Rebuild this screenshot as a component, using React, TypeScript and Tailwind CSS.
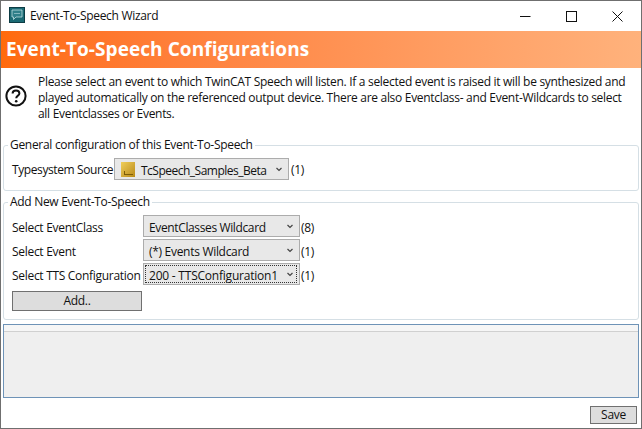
import React from 'react';

const font = { fontFamily: '"Open Sans", "Noto Sans", sans-serif' };

function Chevron() {
  return (
    <svg width="6" height="5" viewBox="0 0 6 5" className="ml-auto shrink-0">
      <path d="M0.5 1 L3 3.5 L5.5 1" fill="none" stroke="#444" strokeWidth="1.2" />
    </svg>
  );
}

function Combo({ width, text, focused, icon, textClass }: { width: string; text: string; focused?: boolean; icon?: boolean; textClass?: string }) {
  return (
    <div className={`flex h-[22px] items-center border border-[#acacac] bg-[#e8e8e8] pr-[6px] ${width} ${icon ? 'pl-[6px]' : 'pl-[5px]'}`}>
      <div className="relative flex h-full grow items-center">
        {focused && <div className="absolute -left-[4px] top-[1px] bottom-[1px] -right-[4px] border border-dotted border-[#333]" />}
        {icon && (
          <div className="mr-[6px] flex h-[15px] w-[14px] items-end justify-center bg-gradient-to-br from-[#f0cf5a] to-[#b98a12] pb-[2px]">
            <div className="h-[4px] w-[9px] border-b border-l border-[#7d5c08]" />
          </div>
        )}
        <span className={`whitespace-nowrap pt-[3px] ${textClass ?? ''}`}>{text}</span>
        <Chevron />
      </div>
    </div>
  );
}

function Group({ title, className, children }: { title: string; className: string; children: React.ReactNode }) {
  return (
    <fieldset className={`mx-[2px] rounded-[3px] border border-[#d5dfe5] pl-[8px] pr-[4px] ${className}`}>
      <legend className="-ml-[4px] px-[2px] leading-[16px]">{title}</legend>
      {children}
    </fieldset>
  );
}

function Row({ label, children, count }: { label: string; children: React.ReactNode; count: string }) {
  return (
    <div className="flex h-[24px] items-center">
      <span className="w-[131px] shrink-0 whitespace-nowrap pt-[3px]">{label}</span>
      {children}
      <span className="ml-[1px] pt-[3px]">{count}</span>
    </div>
  );
}

export default function App() {
  return (
    <div style={font} className="flex h-[429px] w-[642px] flex-col overflow-hidden border border-t-0 border-[#6f6f6f] bg-white text-[12px] tracking-[-0.3px] text-[#111]">
      <div className="flex h-[31px] shrink-0 items-center border-t border-[#6f6f6f] pl-[8px]">
        <svg width="16" height="16" viewBox="0 0 16 16" className="mb-[2px] mr-[5px] shrink-0">
          <rect x="0.5" y="0.5" width="15" height="15" fill="#1b6a74" stroke="#0d3c44" />
          <path d="M3 3 H13 V10 H7 L4.5 12.5 V10 H3 Z" fill="#2f7f89" stroke="#bcdfe2" strokeWidth="0.8" />
          <path d="M5.5 6.5 H6.5 M7.5 6.5 H8.5 M9.5 6.5 H10.5" stroke="#d7eef0" strokeWidth="1" />
        </svg>
        <span>Event-To-Speech Wizard</span>
        <div className="ml-auto flex items-center">
          <svg width="11" height="11" viewBox="0 0 11 11" className="mr-[35px]">
            <path d="M0 5.5 H10.5" stroke="#111" />
          </svg>
          <svg width="11" height="11" viewBox="0 0 11 11" className="mr-[35px]">
            <rect x="0.5" y="0.5" width="10" height="10" fill="none" stroke="#111" />
          </svg>
          <svg width="11" height="11" viewBox="0 0 11 11" className="mr-[18px]">
            <path d="M0.5 0.5 L10.5 10.5 M10.5 0.5 L0.5 10.5" stroke="#111" />
          </svg>
        </div>
      </div>

      <div className="flex h-[37px] shrink-0 items-center bg-gradient-to-r from-[#ff6a0c] to-[#ffb27c] pl-[5px] text-[19px] font-bold tracking-[0.07px] text-white">
        Event-To-Speech Configurations
      </div>

      <div className="flex h-[69px] shrink-0 pt-[6px]">
        <svg width="22" height="22" viewBox="0 0 22 22" className="ml-[4px] mr-[11px] mt-[11px] shrink-0">
          <circle cx="11" cy="11" r="9.6" fill="none" stroke="#111" strokeWidth="2" />
          <path d="M7.6 8.6 C7.6 6.7 9.2 5.6 11 5.6 C13 5.6 14.4 6.8 14.4 8.4 C14.4 10.6 11.2 10.7 11.2 13.2" fill="none" stroke="#111" strokeWidth="2" />
          <circle cx="11.2" cy="16.2" r="1.3" fill="#111" />
        </svg>
        <p className="w-[592px] leading-[16px]">
          Please select an event to which TwinCAT Speech will listen. If a selected event is raised it will be synthesized and played automatically on the referenced output device. There are also Eventclass- and Event-Wildcards to select all Eventclasses or Events.
        </p>
      </div>

      <Group title="General configuration of this Event-To-Speech" className="h-[54px]">
        <div className="mt-[4px] flex h-[24px] items-center">
          <span className="w-[102px] shrink-0 whitespace-nowrap pt-[2px] tracking-[-0.4px]">Typesystem Source</span>
          <Combo width="w-[175px]" text="TcSpeech_Samples_Beta" textClass="tracking-[-0.5px]" icon />
          <span className="ml-[2px] pt-[2px]">(1)</span>
        </div>
      </Group>

      <Group title="Add New Event-To-Speech" className="mt-[3px] h-[126px]">
        <div className="pt-[4px]">
          <Row label="Select EventClass" count="(8)">
            <Combo width="w-[157px]" text="EventClasses Wildcard" textClass="tracking-[-0.37px]" />
          </Row>
          <Row label="Select Event" count="(1)">
            <Combo width="w-[157px]" text="(*) Events Wildcard" />
          </Row>
          <Row label="Select TTS Configuration" count="(1)">
            <Combo width="w-[157px]" text="200 - TTSConfiguration1" textClass="tracking-[-0.22px]" focused />
          </Row>
        </div>
        <button className="mt-[5px] block h-[20px] w-[130px] border border-[#707070] bg-[#dddddd] text-center leading-[18px]">Add..</button>
      </Group>

      <div className="mx-[2px] mt-[4px] h-[74px] shrink-0 border border-[#6e93b7] bg-[#efefef]">
        <div className="h-[7px] border-b border-[#d0d0d0] bg-[#f6f6f6]" />
      </div>

      <div className="flex justify-end pr-[4px] pt-[8px]">
        <button className="h-[18px] w-[47px] border border-[#707070] bg-[#dddddd] text-center leading-[16px]">Save</button>
      </div>
    </div>
  );
}
